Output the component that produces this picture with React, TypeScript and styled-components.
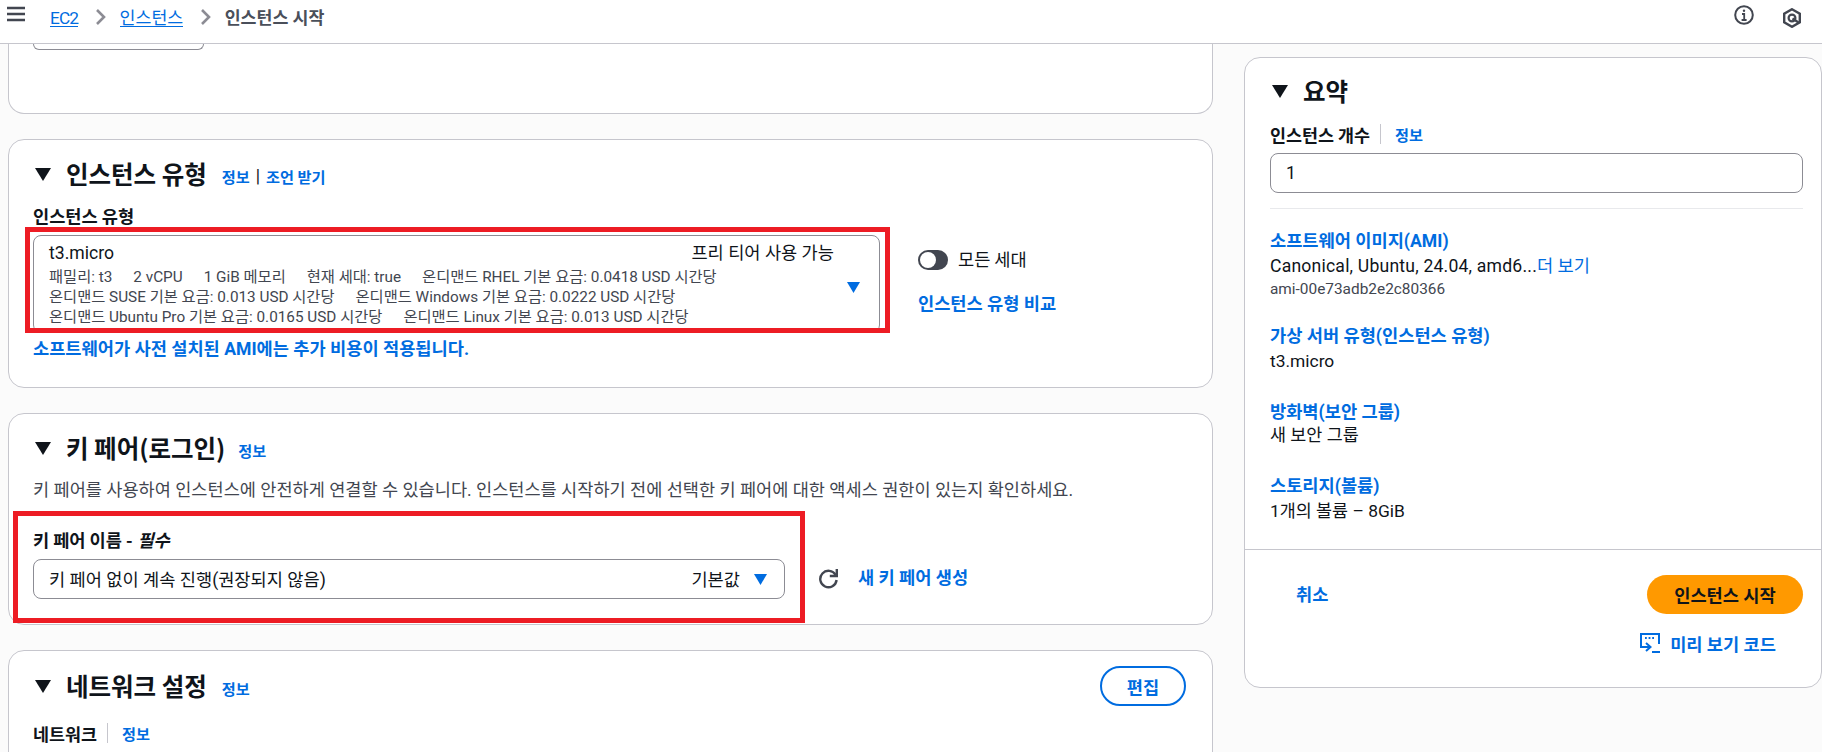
import React from "react";
import styled, { createGlobalStyle } from "styled-components";

const FONT = `Roboto, "Noto Sans CJK KR", sans-serif`;
const KR = `"Noto Sans CJK KR", sans-serif`;

const Global = createGlobalStyle`
  html, body { margin: 0; padding: 0; background: #fbfbfb; overflow: hidden; }
  * { box-sizing: border-box; }
  body { font-family: ${FONT}; color: #0f141a; font-size: 17.6px; }
`;

const Page = styled.div`width: 1822px; height: 752px; overflow: hidden; display: flex; flex-direction: column;`;
const Header = styled.header`
  height: 44px; flex: none; background: #fff; border-bottom: 1px solid #c6c6cd;
  display: flex; align-items: flex-start; padding: 5px 0 0 7px;
`;
const MenuIcon = styled.svg`width: 18px; height: 18px; flex: none;`;
const Crumbs = styled.nav`display: flex; align-items: flex-start; margin: 2px 0 0 25px; height: 22px; font-size: 17.3px; line-height: 22px;`;
const CrumbLink = styled.a<{ $tight?: boolean }>`
  color: #006ce0; border-bottom: 1px solid #006ce0; height: 20px; letter-spacing: ${(p) => (p.$tight ? "-0.9px" : "0")};
`;
const CrumbCurrent = styled.span`color: #4a4f5a; font-weight: 700;`;
const CrumbSep = styled.svg`width: 12px; height: 18px; margin: 1px 13px 0 16.5px; flex: none;`;
const HeaderIcons = styled.div`margin-left: auto; display: flex; align-items: flex-start; gap: 28px; padding-right: 20px;`;
const HeaderIcon = styled.svg<{ $top?: number }>`width: 20px; height: 20px; margin-top: ${(p) => p.$top ?? 0}px; flex: none;`;

const Main = styled.main`
  flex: 1; min-height: 0; overflow: hidden; display: grid; grid-template-columns: 1205px 578px;
  column-gap: 31px; padding-left: 8px; align-items: start;
`;
const LeftCol = styled.div`display: flex; flex-direction: column; gap: 25px;`;
const Card = styled.section<{ $bottom?: number }>`
  background: #fff; border: 1px solid #c6c6cd; border-radius: 16px; padding: 20px 26px ${(p) => p.$bottom ?? 25}px 24px;
`;
const ClippedCard = styled(Card)`
  height: 70px; padding-top: 0; border-top: none; border-radius: 0 0 16px 16px;
`;
const Stub = styled.div`
  width: 171px; height: 6px; border: 1px solid #8c8c94; border-top: none; border-radius: 0 0 8px 8px;
`;
const TitleRow = styled.div<{ $top?: number }>`display: flex; align-items: center; height: 26px; margin-top: ${(p) => p.$top ?? 0}px;`;
const Caret = styled.svg`width: 16px; height: 13px; margin: 1px 15px 0 2px; flex: none;`;
const Title = styled.h2`margin: 0; font-size: 24.5px; line-height: 26px; font-weight: 700; font-family: ${KR};`;
const InfoLink = styled.a<{ $left?: number; $drop?: number }>`
  color: #006ce0; font-weight: 700; font-size: 15.2px; line-height: 20px; margin-left: ${(p) => p.$left ?? 0}px;
  margin-top: ${(p) => p.$drop ?? 0}px; font-family: ${KR}; white-space: nowrap;
`;
const Pipe = styled.span`font-size: 17.6px; margin: 4px 6px 0; line-height: 20px; font-weight: 400;`;
const FieldLabel = styled.div<{ $top?: number }>`
  font-weight: 700; font-size: 17.6px; line-height: 24px; margin-top: ${(p) => p.$top ?? 0}px; font-family: ${KR}; display: flex; align-items: center;
`;
const Em = styled.em`font-style: italic; margin-left: 5px;`;
const Annotated = styled.div`position: relative;`;
const RedBox = styled.div<{ $inset: string }>`
  position: absolute; inset: ${(p) => p.$inset}; border: 5px solid #ed1c24; pointer-events: none;
`;
const TypeRow = styled.div`display: flex; margin-top: 7px; gap: 38px;`;
const TypeSelect = styled.div`
  width: 847px; height: 98px; border: 1px solid #8c8c94; border-radius: 8px; padding: 6px 19px 0 15px;
  display: flex; align-items: center; background: #fff;
`;
const TypeBody = styled.div`flex: 1; align-self: flex-start;`;
const TypeHead = styled.div`display: flex; justify-content: space-between; line-height: 22px; padding-right: 13px; font-size: 17.6px; margin-bottom: 3px;`;
const TagRow = styled.div`display: flex; gap: 21px; font-size: 15.3px; line-height: 20px; color: #424650; white-space: nowrap;`;
const SelectCaret = styled.svg<{ $drop?: number }>`width: 13px; height: 11px; flex: none; margin-top: ${(p) => p.$drop ?? 0}px;`;
const SideCol = styled.div`display: flex; flex-direction: column; padding-top: 15px;`;
const ToggleRow = styled.div`display: flex; align-items: center; gap: 10px; height: 20px; font-size: 17.6px; font-family: ${KR};`;
const ToggleText = styled.span`margin-top: -3px;`;
const Toggle = styled.span`
  width: 30px; height: 20px; border-radius: 10px; background: #424650; display: flex; align-items: center; padding-left: 2px;
  &::before { content: ""; width: 16px; height: 16px; border-radius: 50%; background: #fff; }
`;
const StrongLink = styled.a<{ $top?: number }>`
  color: #006ce0; font-weight: 700; font-size: 17.6px; line-height: 24px; display: block; white-space: nowrap;
  margin-top: ${(p) => p.$top ?? 0}px; font-family: ${FONT};
`;
const Description = styled.p`margin: 17px 0 0; font-size: 17.56px; line-height: 24px; color: #424650; white-space: nowrap;`;
const KeyField = styled(Annotated)`width: 752px; margin-top: 26px;`;
const KeySelect = styled.div`
  height: 40px; margin-top: 7px; border: 1px solid #8c8c94; border-radius: 8px; padding: 0 17px 2px 15px; display: flex; align-items: center;
  font-size: 17.6px; background: #fff;
`;
const Grow = styled.span`flex: 1;`;
const DefaultTag = styled.span`margin-right: 14px;`;
const KeyActions = styled.div`display: flex; align-items: center; gap: 19px; margin-left: 33px; margin-top: 64px;`;
const KeyLayout = styled.div`display: flex; align-items: flex-start;`;
const RefreshIcon = styled.svg`width: 21px; height: 21px; flex: none;`;
const NetworkHead = styled.div`display: flex; align-items: center; justify-content: space-between; height: 40px; margin-top: -5px;`;
const TitleGroup = styled.div`display: flex; align-items: center;`;
const EditButton = styled.button`
  width: 86px; height: 40px; border: 2px solid #006ce0; border-radius: 20px; background: #fff; color: #006ce0;
  font: 700 17.6px ${FONT};
`;
const InlineLabel = styled.div<{ $top?: number }>`
  display: flex; align-items: center; height: 24px; margin-top: ${(p) => p.$top ?? 0}px; font-weight: 700; font-size: 17.4px; font-family: ${KR};
`;
const VRule = styled.span`width: 1px; height: 20px; background: #c6c6cd; margin: 0 14px 0 10px;`;

const SummaryCard = styled.aside`
  margin-top: 13px; height: 631px; background: #fff; border: 1px solid #c6c6cd; border-radius: 16px;
`;
const SummaryBody = styled.div`padding: 20px 18px 0 25px; height: 491px;`;
const Input = styled.div`
  height: 40px; margin-top: 7px; border: 1px solid #8c8c94; border-radius: 8px; padding-left: 15px; display: flex; align-items: center; font-size: 17.6px;
`;
const Hr = styled.div`height: 1px; background: #e8e9ec; margin-top: 15px;`;
const SumLink = styled.a<{ $top: number }>`
  display: block; color: #006ce0; font-weight: 700; font-size: 17.6px; line-height: 24px; margin-top: ${(p) => p.$top}px;
`;
const SumText = styled.div<{ $top: number; $wide?: boolean }>`
  font-size: ${(p) => (p.$wide ? 17.6 : 17.4)}px; line-height: 24px; margin-top: ${(p) => p.$top}px; white-space: nowrap;
  letter-spacing: ${(p) => (p.$wide ? "0.2px" : "0")};
`;
const More = styled.a`color: #006ce0; letter-spacing: 0;`;
const SumId = styled.div`font-size: 15.4px; line-height: 20px; margin-top: 1px; color: #424650;`;
const Footer = styled.div`border-top: 1px solid #c6c6cd; padding: 25px 18px 0 51px;`;
const FooterRow = styled.div`display: flex; align-items: center; justify-content: space-between;`;
const Cancel = styled.a`color: #006ce0; font-weight: 700; font-size: 17.6px; margin-top: -3px;`;
const Launch = styled.button`
  width: 156px; height: 39px; border: none; border-radius: 20px; background: #ff9900; color: #0f141a; font: 700 17.6px ${FONT};
`;
const PreviewRow = styled.div`display: flex; align-items: center; justify-content: flex-end; gap: 10px; margin-top: 19px; padding-right: 27px; color: #006ce0; font-weight: 700; font-size: 17.6px; height: 20px;`;
const PreviewIcon = styled.svg`width: 20px; height: 20px; flex: none;`;

const CaretDown = () => (
  <Caret viewBox="0 0 16 13"><path d="M0 0h16L8 13z" fill="#0f141a" /></Caret>
);
const BlueCaret = ({ drop }: { drop?: number }) => (
  <SelectCaret $drop={drop} viewBox="0 0 13 11"><path d="M0 0h13L6.5 11z" fill="#006ce0" /></SelectCaret>
);
const Sep = () => (
  <CrumbSep viewBox="0 0 12 18"><path d="M2 2l7 7-7 7" fill="none" stroke="#8c8c94" strokeWidth="2.6" /></CrumbSep>
);

export default function App() {
  return (
    <Page>
      <Global />
      <Header>
        <MenuIcon viewBox="0 0 18 18">
          <path d="M0 3h18M0 9h18M0 15h18" stroke="#424650" strokeWidth="2.4" />
        </MenuIcon>
        <Crumbs>
          <CrumbLink $tight>EC2</CrumbLink>
          <Sep />
          <CrumbLink>인스턴스</CrumbLink>
          <Sep />
          <CrumbCurrent>인스턴스 시작</CrumbCurrent>
        </Crumbs>
        <HeaderIcons>
          <HeaderIcon viewBox="0 0 20 20">
            <circle cx="10" cy="10" r="8.8" fill="none" stroke="#424650" strokeWidth="2" />
            <path d="M8 9h2.2v6M7.6 15h5" fill="none" stroke="#424650" strokeWidth="1.8" />
            <circle cx="10" cy="5.8" r="1.2" fill="#424650" />
          </HeaderIcon>
          <HeaderIcon $top={3} viewBox="0 0 20 20">
            <path d="M10 1.2l7.8 4.4v8.8L10 18.8l-7.8-4.4V5.6z" fill="none" stroke="#424650" strokeWidth="2.4" />
            <circle cx="10" cy="10" r="3.4" fill="none" stroke="#424650" strokeWidth="2.2" />
            <path d="M10.5 10.5l6 4" stroke="#424650" strokeWidth="2.2" />
          </HeaderIcon>
        </HeaderIcons>
      </Header>
      <Main>
        <LeftCol>
          <ClippedCard><Stub /></ClippedCard>

          <Card $bottom={26}>
            <TitleRow $top={1}>
              <CaretDown />
              <Title>인스턴스 유형</Title>
              <InfoLink $left={15} $drop={4}>정보</InfoLink>
              <Pipe>|</Pipe>
              <InfoLink $drop={4}>조언 받기</InfoLink>
            </TitleRow>
            <FieldLabel $top={17}>인스턴스 유형</FieldLabel>
            <TypeRow>
              <Annotated>
                <TypeSelect>
                  <TypeBody>
                    <TypeHead><span>t3.micro</span><span>프리 티어 사용 가능</span></TypeHead>
                    <TagRow><span>패밀리: t3</span><span>2 vCPU</span><span>1 GiB 메모리</span><span>현재 세대: true</span><span>온디맨드 RHEL 기본 요금: 0.0418 USD 시간당</span></TagRow>
                    <TagRow><span>온디맨드 SUSE 기본 요금: 0.013 USD 시간당</span><span>온디맨드 Windows 기본 요금: 0.0222 USD 시간당</span></TagRow>
                    <TagRow><span>온디맨드 Ubuntu Pro 기본 요금: 0.0165 USD 시간당</span><span>온디맨드 Linux 기본 요금: 0.013 USD 시간당</span></TagRow>
                  </TypeBody>
                  <BlueCaret />
                </TypeSelect>
                <RedBox $inset="-8px -10px 0 -8px" />
              </Annotated>
              <SideCol>
                <ToggleRow><Toggle /><ToggleText>모든 세대</ToggleText></ToggleRow>
                <StrongLink $top={22}>인스턴스 유형 비교</StrongLink>
              </SideCol>
            </TypeRow>
            <StrongLink $top={4}>소프트웨어가 사전 설치된 AMI에는 추가 비용이 적용됩니다.</StrongLink>
          </Card>

          <Card>
            <TitleRow $top={1}>
              <CaretDown />
              <Title>키 페어(로그인)</Title>
              <InfoLink $left={13} $drop={4}>정보</InfoLink>
            </TitleRow>
            <Description>키 페어를 사용하여 인스턴스에 안전하게 연결할 수 있습니다. 인스턴스를 시작하기 전에 선택한 키 페어에 대한 액세스 권한이 있는지 확인하세요.</Description>
            <KeyLayout>
              <KeyField>
                <FieldLabel>키 페어 이름 -<Em>필수</Em></FieldLabel>
                <KeySelect>
                  키 페어 없이 계속 진행(권장되지 않음)<Grow />
                  <DefaultTag>기본값</DefaultTag>
                  <BlueCaret drop={2} />
                </KeySelect>
                <RedBox $inset="-17px -20px -24px -20px" />
              </KeyField>
              <KeyActions>
                <RefreshIcon viewBox="0 0 21 21">
                  <path d="M17.6 7A8.2 8.2 0 1 0 18.6 12" fill="none" stroke="#424650" strokeWidth="2.4" />
                  <path d="M18.8 1v7h-7" fill="none" stroke="#424650" strokeWidth="2.4" />
                </RefreshIcon>
                <StrongLink>새 키 페어 생성</StrongLink>
              </KeyActions>
            </KeyLayout>
          </Card>

          <Card>
            <NetworkHead>
              <TitleGroup>
                <CaretDown />
                <Title>네트워크 설정</Title>
                <InfoLink $left={15} $drop={4}>정보</InfoLink>
              </TitleGroup>
              <EditButton>편집</EditButton>
            </NetworkHead>
            <InlineLabel $top={15}>네트워크<VRule /><InfoLink>정보</InfoLink></InlineLabel>
          </Card>
        </LeftCol>

        <SummaryCard>
          <SummaryBody>
            <TitleRow>
              <CaretDown />
              <Title>요약</Title>
            </TitleRow>
            <InlineLabel $top={18}>인스턴스 개수<VRule /><InfoLink>정보</InfoLink></InlineLabel>
            <Input>1</Input>
            <Hr />
            <SumLink $top={20}>소프트웨어 이미지(AMI)</SumLink>
            <SumText $top={1} $wide>Canonical, Ubuntu, 24.04, amd6...<More>더 보기</More></SumText>
            <SumId>ami-00e73adb2e2c80366</SumId>
            <SumLink $top={25}>가상 서버 유형(인스턴스 유형)</SumLink>
            <SumText $top={1}>t3.micro</SumText>
            <SumLink $top={27}>방화벽(보안 그룹)</SumLink>
            <SumText $top={-1}>새 보안 그룹</SumText>
            <SumLink $top={27}>스토리지(볼륨)</SumLink>
            <SumText $top={1}>1개의 볼륨 – 8GiB</SumText>
          </SummaryBody>
          <Footer>
            <FooterRow>
              <Cancel>취소</Cancel>
              <Launch>인스턴스 시작</Launch>
            </FooterRow>
            <PreviewRow>
              <PreviewIcon viewBox="0 0 20 20">
                <path d="M19 11V1H1v13h9" fill="none" stroke="#006ce0" strokeWidth="2" />
                <path d="M5 5h1.8M8.6 5h1.8M12.2 5H14" stroke="#006ce0" strokeWidth="2" />
                <path d="M6 10l4.5 4L6 18" fill="none" stroke="#006ce0" strokeWidth="2" />
                <path d="M12 19h8" stroke="#006ce0" strokeWidth="2" />
              </PreviewIcon>
              미리 보기 코드
            </PreviewRow>
          </Footer>
        </SummaryCard>
      </Main>
    </Page>
  );
}
